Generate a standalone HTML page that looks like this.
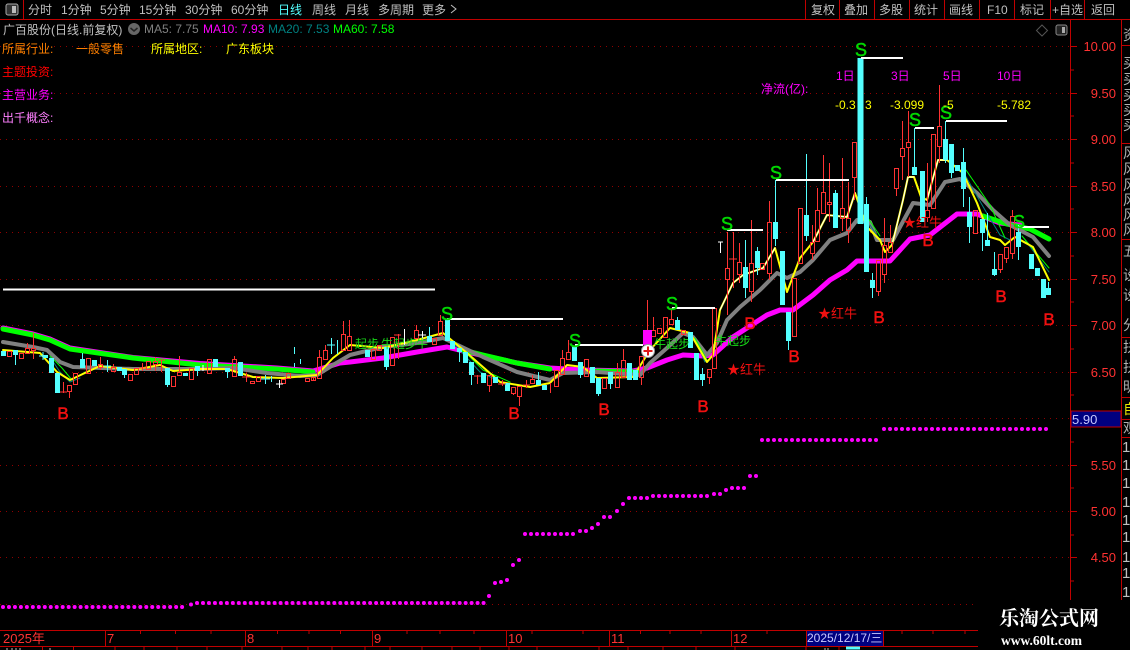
<!DOCTYPE html>
<html><head><meta charset="utf-8"><style>
html,body{margin:0;padding:0;background:#000;width:1130px;height:650px;overflow:hidden}
svg{display:block;font-family:"Liberation Sans","WenQuanYi Zen Hei","Noto Sans CJK SC",sans-serif;font-size:12px}
.c{fill:none;stroke:#54ffff}.r{fill:none;stroke:#ff3232}
</style></head><body>
<svg width="1130" height="650" viewBox="0 0 1130 650" xmlns="http://www.w3.org/2000/svg">
<rect width="1130" height="650" fill="#000"/>

<!-- grid -->
<g stroke="#900000" stroke-width="1" stroke-dasharray="1 5" fill="none">
<path d="M0 46.500H1070M0 93.500H1070M0 139.500H1070M0 186.500H1070M0 232.500H1070M0 279.500H1070M0 325.500H1070M0 372.500H1070M0 418.500H1070M0 465.500H1070M0 511.500H1070M0 557.500H1070M0 604.500H1070"/>
</g>

<!-- top bar -->
<path d="M0 19.500H1130M23.500 0V20M805.500 0V20M839.500 0V20M874.500 0V20M909.500 0V20M944.500 0V20M979.500 0V20M1014.500 0V20M1050.500 0V20M1084.500 0V20" stroke="#c00000" fill="none"/>
<rect x="6" y="4" width="12" height="11" rx="2" fill="#333" stroke="#aaa"/><rect x="12" y="6" width="4" height="7" fill="#bbb"/>
<g fill="#c0c0c0">
<text x="28" y="14">分时</text><text x="61" y="14">1分钟</text><text x="100" y="14">5分钟</text><text x="139" y="14">15分钟</text><text x="185" y="14">30分钟</text><text x="231" y="14">60分钟</text>
<text x="278" y="14" fill="#54ffff">日线</text><text x="312" y="14">周线</text><text x="345" y="14">月线</text><text x="378" y="14">多周期</text><text x="422" y="14">更多</text>
<path d="M451 5l5 4-5 4" fill="none" stroke="#c0c0c0"/>
<text x="811" y="14">复权</text><text x="844" y="14">叠加</text><text x="879" y="14">多股</text><text x="914" y="14">统计</text><text x="949" y="14">画线</text><text x="987" y="14">F10</text><text x="1020" y="14">标记</text><text x="1052" y="14">+自选</text><text x="1091" y="14">返回</text>
</g>

<!-- info -->
<text x="3" y="34" fill="#c0c0c0">广百股份(日线.前复权)</text>
<circle cx="134" cy="29" r="6" fill="#666"/><path d="M130.500 28l3.500 3 3.500-3" fill="none" stroke="#222" stroke-width="1.500"/>
<text x="144" y="33" fill="#808080">MA5: 7.75</text>
<text x="203" y="33" fill="#f0f">MA10: 7.93</text>
<text x="268" y="33" fill="#008080">MA20: 7.53</text>
<text x="333" y="33" fill="#0f0">MA60: 7.58</text>
<text x="2" y="53" fill="#ff8000">所属行业:</text><text x="76" y="53" fill="#ff8000">一般零售</text>
<text x="151" y="53" fill="#ff0">所属地区:</text><text x="226" y="53" fill="#ff0">广东板块</text>
<text x="2" y="76" fill="#f00">主题投资:</text>
<text x="2" y="99" fill="#f0f">主营业务:</text>
<text x="2" y="122" fill="#ff80ff">出千概念:</text>

<!-- corner icons -->
<path d="M1042 25l5.500 5.500-5.500 5.500-5.500-5.500z" fill="none" stroke="#555"/>
<rect x="1056" y="25" width="11" height="10" rx="2" fill="#222" stroke="#888"/><rect x="1062" y="27" width="3" height="6" fill="#aaa"/>

<!-- long white level -->
<path d="M3 289.500H435" stroke="#fff" stroke-width="2"/>

<!-- MA lines -->
<g fill="none" stroke-linejoin="round" stroke-linecap="round">
<path d="M3 328L33 334L50 339L70 348L133 357.500L200 363.500L277 368L313 371L320 369L340 363L350 362L383 358L417 352L447 347L463 351L483 355.500L517 363L550 368L583 370L633 371L647 368L667 360L683 355L703 356L713 355L733 337L767 315L780 310L793 310L813 295L830 280L847 270L857 261L890 261L910 239L930 235L957 214L977 214L1000 223L1020 225" stroke="#f0f" stroke-width="5"/>
<path d="M3 329L33 335L50 340L70 349L133 358L200 365L277 369L313 372" stroke="#0f0" stroke-width="5"/>
<path d="M463 350L483 355L517 363L550 369M597 371L637 372" stroke="#0f0" stroke-width="5"/>
<path d="M983 216L1007 224L1030 229L1049 239" stroke="#0f0" stroke-width="5"/>
<path d="M3 342L33 347L47 350L60 362L73 367L133 369L200 369L233 368L267 373L300 376L317 375L333 365L350 355L383 347L417 343L443 338L483 357L517 372L550 380L563 373L597 372L640 375L650 363L667 348L683 333L693 337L707 355L717 343L727 320L740 307L760 290L777 273L787 278L800 272L813 260L830 240L847 233L857 220L870 222L877 240L893 240L913 203L930 205L945 182L960 179L977 193L993 210L1010 225L1033 237L1049 256" stroke="#808080" stroke-width="4"/>
<path d="M50 357L60 372L70 382L80 378M455 345L480 372L505 384M695 340L705 362M870 225L880 240M965 175L985 210L1000 235L1010 240M1025 240L1049 272" stroke="#008080" stroke-width="1"/>
<path d="M50 356L62 368L72 380L85 372M455 342L483 370L510 382M695 338L707 360M868 218L880 236M966 170L990 205L1005 238M1022 236L1049 268" stroke="#0f0" stroke-width="1"/>
<path d="M3 350L40 353L57 372L70 380L87 372L100 366L133 370L160 365L173 371L200 369L227 369L253 377L283 378L317 375L333 358L350 345L383 348L417 340L443 333L467 353L500 382L530 387L550 383L567 365L583 367L597 378L633 377L650 350L670 328L690 333L707 362L713 355L720 310L733 283L743 275L763 268L775 248L787 292L800 258L813 242L827 215L847 217L855 193L867 227L880 240L885 252L892 245L903 200L908 177L914 177L921 197L927 200L938 160L947 160L963 173L977 203L990 237L1000 240L1005 245L1015 237L1033 247L1049 280" stroke="#ff0" stroke-width="2"/>
<path d="M720 310L733 283L743 275L763 268L775 248M813 242L827 215L847 217L855 193M892 245L903 200L908 177L914 177M927 200L938 160L947 160" stroke="#fff" stroke-width="1"/>
</g>

<!-- candles -->
<g shape-rendering="crispEdges">
<!-- cyan wicks -->
<path class="c" d="M15.500 355V365M82.500 353V368M107.500 360V372M104 366h7M124.500 375V378M39 356h8M43 352V360M167.500 385V387M197.500 371V376M227.500 372V378M265.500 375V384M261 379h9M271.500 376V382M294.500 347V354M294.500 363V367M300.500 359V364M337.500 340V354M331.500 338V354M327 345h8M386.500 367V370M429.500 327V336M459.500 352V362M471.500 375V385M538.500 372V380M580.500 375V378M598.500 394V396M610.500 384V389M677.500 317V320M702.500 368V386M745.500 240V298M757.500 247V275M775.500 180V222M775.500 239V246M788.500 341V350M806.500 154V215M806.500 236V241M835.500 190V193M866.500 197V204M872.500 273V298M914.500 128V167M945.500 121V139M945.500 160V163M951.500 173V178M963.500 148V162M963.500 189V207M969.500 197V212M969.500 227V243M982.500 233V251M987.500 213V240M994.500 252V276M1018.500 225V232M1018.500 247V260M1048.500 282V290"/>
<!-- cyan bodies -->
<path fill="none" stroke="#54ffff" stroke-width="5" d="M3.500 351V356M15.500 350V355M45.500 355V358M51.500 358V373M57.500 373V393M82.500 359V368M94.500 360V366M119.500 367V371M124.500 369V375M167.500 368V385M185.500 373V376M197.500 366V371M215.500 359V367M227.500 368V372M240.500 362V376M367.500 350V357M386.500 347V367M429.500 336V342M447.500 319V341M452.500 341V349M459.500 348V352M465.500 352V363M471.500 362V375M483.500 373V383M495.500 377V383M507.500 383V391M538.500 380V385M544.500 385V390M574.500 346V361M580.500 362V375M592.500 367V383M598.500 378V394M610.500 372V384M629.500 363V380M635.500 370V380M677.500 320V330M690.500 332V348M696.500 353V380M702.500 374V380M745.500 267V288M757.500 251V268M775.500 222V239M782.500 251V305M788.500 312V341M806.500 215V236M835.500 193V228M866.500 204V272M872.500 280V288M914.500 167V175M922.500 171V222M945.500 139V160M951.500 144V173M957.500 165V171M963.500 162V189M969.500 212V227M982.500 219V233M987.500 240V246M994.500 269V275M1018.500 232V247M1031.500 254V269M1037.500 268V276M1043.500 279V298M1048.500 288V295"/>
<path fill="none" stroke="#54ffff" stroke-width="6" d="M860.500 58V224"/>
<!-- red wicks -->
<path class="r" d="M27.500 343V348M33.500 333V348M33.500 350V359M63.500 382V393M60 392h7M69.500 391V398M100.500 357V364M100.500 367V370M113.500 364V367M142.500 363V371M139 368h7M155.500 357V361M155.500 364V371M161.500 360V372M158 360h7M179.500 356V372M179.500 375V376M234.500 356V359M246.500 373V382M242 377h8M313.500 377V381M319.500 350V357M325.500 345V350M343.500 321V334M349.500 320V336M398.500 334V359M394 335h7M416.500 325V330M440.500 315V321M477.500 375V384M474 376h7M489.500 385V392M502.500 380V386M498 384h8M513.500 393V395M519.500 396V406M526.500 380V388M523 385h7M532.500 375V379M550.500 383V393M562.500 350V358M568.500 340V352M617.500 363V372M623.500 349V360M641.500 377V385M647.500 300V330M653.500 317V330M671.500 308V319M709.500 377V384M727.500 232V268M727.500 279V315M733.500 232V288M729 259h8M739.500 243V262M739.500 274V283M751.500 220V263M751.500 291V302M769.500 201V222M769.500 273V280M812.500 225V242M812.500 253V260M817.500 188V210M823.500 155V192M829.500 163V202M829.500 204V222M842.500 158V208M842.500 218V231M848.500 182V218M848.500 230V243M854.500 177V200M878.500 291V296M884.500 218V245M884.500 274V283M890.500 225V242M896.500 188V196M902.500 121V148M902.500 156V180M908.500 111V142M908.500 147V177M927.500 163V210M927.500 217V222M939.500 85V126M939.500 146V163M1000.500 269V273M1006.500 258V263M1012.500 210V216M1012.500 253V259"/>
<!-- red bodies -->
<path class="r" d="M7.500 351.500h4v5h-4zM19.500 353.500h4v5h-4zM25.500 348.500h4v5h-4zM31.500 348.500h4v2h-4zM67.500 385.500h4v6h-4zM73.500 373.500h4v11h-4zM86.500 358.500h4v15h-4zM98.500 364.500h4v3h-4zM111.500 367.500h4v4h-4zM128.500 374.500h4v6h-4zM134.500 368.500h4v6h-4zM146.500 361.500h4v8h-4zM153.500 361.500h4v3h-4zM171.500 376.500h4v10h-4zM177.500 372.500h4v3h-4zM189.500 368.500h4v11h-4zM207.500 359.500h4v14h-4zM232.500 359.500h4v17h-4zM250.500 381.500h4v2h-4zM256.500 376.500h4v5h-4zM281.500 379.500h4v4h-4zM286.500 373.500h4v5h-4zM305.500 378.500h4v3h-4zM311.500 377.500h4v3h-4zM317.500 357.500h4v21h-4zM323.500 350.500h4v9h-4zM341.500 334.500h4v16h-4zM347.500 336.500h4v14h-4zM371.500 349.500h4v10h-4zM377.500 345.500h4v5h-4zM390.500 337.500h4v28h-4zM414.500 330.500h4v8h-4zM432.500 338.500h4v6h-4zM438.500 321.500h4v14h-4zM487.500 375.500h4v10h-4zM511.500 387.500h4v6h-4zM517.500 386.500h4v10h-4zM530.500 379.500h4v4h-4zM554.500 370.500h4v16h-4zM560.500 358.500h4v16h-4zM566.500 352.500h4v7h-4zM584.500 359.500h4v17h-4zM602.500 378.500h4v10h-4zM615.500 372.500h4v15h-4zM621.500 360.500h4v17h-4zM639.500 356.500h4v21h-4zM651.500 330.500h4v6h-4zM657.500 328.500h4v5h-4zM663.500 317.500h4v20h-4zM669.500 319.500h4v5h-4zM681.500 330.500h4v4h-4zM707.500 369.500h4v8h-4zM712.500 308.500h4v60h-4zM725.500 268.500h4v11h-4zM737.500 262.500h4v12h-4zM749.500 263.500h4v28h-4zM760.500 263.500h4v6h-4zM767.500 222.500h4v51h-4zM792.500 278.500h4v58h-4zM798.500 208.500h4v55h-4zM810.500 242.500h4v11h-4zM815.500 210.500h4v31h-4zM821.500 192.500h4v21h-4zM827.500 202.500h4v2h-4zM840.500 208.500h4v10h-4zM846.500 218.500h4v12h-4zM852.500 142.500h4v35h-4zM876.500 260.500h4v31h-4zM882.500 245.500h4v29h-4zM888.500 242.500h4v10h-4zM894.500 168.500h4v20h-4zM900.500 148.500h4v8h-4zM906.500 142.500h4v5h-4zM925.500 210.500h4v7h-4zM931.500 134.500h4v74h-4zM937.500 126.500h4v20h-4zM973.500 210.500h4v23h-4zM998.500 254.500h4v15h-4zM1004.500 247.500h4v11h-4zM1010.500 216.500h4v37h-4z"/>
<path stroke="#fff" fill="none" d="M720.500 242V253M718 242h5M404.500 329V345M422.500 331V340M418 335h8M276 384h7M279.500 380V388M203 365V371"/>
</g>

<!-- white levels -->
<path d="M447 319H563M575 345H643M672 308H715M727 230H763M776 180H849M861 58H903M915 128H934M946 121H1007M1018 227H1049" stroke="#fff" stroke-width="2" fill="none"/>

<!-- magenta block & plus -->
<rect x="643" y="330" width="9" height="15" fill="#f0f"/>
<circle cx="648" cy="351" r="6.500" fill="#fff" stroke="#999"/><path d="M648 346.500V355.500M643.500 351H652.500" stroke="#e01818" stroke-width="2"/>

<!-- 牛起步 -->
<g fill="#17d817">
<text x="355" y="348">起步</text><text x="381" y="348">牛起</text><text x="405" y="348">步</text><text x="416" y="348">牛</text>
<text x="654" y="348">牛起步</text>
<text x="715" y="345">牛起步</text>
</g>

<!-- 红牛 -->
<g fill="#f01010" font-size="13">
<text x="818" y="318">★红牛</text>
<text x="727" y="374">★红牛</text>
<text x="903" y="227">★红牛</text>
</g>

<!-- S / B -->
<g fill="#00d800" stroke="#00d800" stroke-width=".5" font-size="18" text-anchor="middle">
<text x="447" y="320">S</text><text x="575" y="347">S</text><text x="672" y="310">S</text><text x="727" y="230">S</text><text x="776" y="179">S</text><text x="861" y="56">S</text><text x="915" y="126">S</text><text x="946" y="119">S</text><text x="1019" y="228">S</text>
</g>
<g fill="#f01010" stroke="#f01010" stroke-width=".5" font-size="17" text-anchor="middle">
<text x="63" y="419">B</text><text x="514" y="419">B</text><text x="604" y="415">B</text><text x="703" y="412">B</text><text x="750" y="329">B</text><text x="794" y="362">B</text><text x="879" y="323">B</text><text x="928" y="246">B</text><text x="1001" y="302">B</text><text x="1049" y="325">B</text>
</g>

<!-- 净流 -->
<g fill="#f0f">
<text x="761" y="93">净流(亿):</text>
<text x="836" y="80">1日</text><text x="891" y="80">3日</text><text x="943" y="80">5日</text><text x="997" y="80">10日</text>
</g>
<g fill="#ff0">
<text x="835" y="109">-0.3</text><text x="865" y="109">3</text><text x="890" y="109">-3.099</text><text x="943" y="109">-5</text><text x="997" y="109">-5.782</text>
</g>

<!-- SAR dots -->
<g fill="none" stroke="#f0f" stroke-width="4" stroke-linecap="round">
<path stroke-dasharray="0 5.970" d="M3 607H186"/>
<path stroke-dasharray="0 5.970" d="M197 603H484"/>
<path d="M191 604.500h0M489 596h0M495 583h0M501 582h0M507 580h0M513 565h0M519 560h0M580 531h0M586 531h0M592 528h0M598 524h0M604 517h0M610 517h0M617 511h0M623 504h0M714 494h0M720 494h0M726 490h0M750 476h0M756 476h0"/>
<path stroke-dasharray="0 6" d="M525 534H575"/>
<path stroke-dasharray="0 6" d="M629 498H648"/>
<path stroke-dasharray="0 6" d="M653 496H709"/>
<path stroke-dasharray="0 6" d="M732 488H745"/>
<path stroke-dasharray="0 6" d="M762 440H879"/>
<path stroke-dasharray="0 6" d="M884 429H1052"/>
</g>

<!-- price axis -->
<path d="M1070.500 20V600M1121.500 20V600" stroke="#c00000" fill="none"/>
<path d="M1070 46.500h7M1070 70h4M1070 93.500h7M1070 116h4M1070 139.500h7M1070 163h4M1070 186.500h7M1070 209h4M1070 232.500h7M1070 256h4M1070 279.500h7M1070 302h4M1070 325.500h7M1070 349h4M1070 372.500h7M1070 395h4M1070 418.500h7M1070 442h4M1070 465.500h7M1070 488h4M1070 511.500h7M1070 535h4M1070 557.500h7M1070 581h4" stroke="#c00000" fill="none"/>
<g fill="#ff3232" text-anchor="end" font-size="13">
<text x="1116" y="51">10.00</text><text x="1116" y="98">9.50</text><text x="1116" y="144">9.00</text><text x="1116" y="191">8.50</text><text x="1116" y="237">8.00</text><text x="1116" y="284">7.50</text><text x="1116" y="330">7.00</text><text x="1116" y="377">6.50</text><text x="1116" y="470">5.50</text><text x="1116" y="516">5.00</text><text x="1116" y="562">4.50</text>
</g>
<rect x="1071" y="411" width="50" height="16" fill="#000080" stroke="#c00000"/>
<text x="1072" y="424" fill="#c8c8ff" font-size="13">5.90</text>

<!-- right strip -->
<path d="M1122 45.500H1130M1122 143.500H1130M1122 239.500H1130M1122 337.500H1130M1122 397.500H1130M1122 419.500H1130M1122 437.500H1130" stroke="#c00000" fill="none"/>
<g fill="#b0b0b0" font-size="14">
<text x="1123" y="40">资</text>
<text x="1123" y="68">买</text><text x="1123" y="84">买</text><text x="1123" y="100">买</text><text x="1123" y="115">买</text><text x="1123" y="130">买</text>
<text x="1123" y="158">风</text><text x="1123" y="174">风</text><text x="1123" y="190">风</text><text x="1123" y="205">风</text><text x="1123" y="220">风</text><text x="1123" y="235">风</text>
<text x="1123" y="256">五</text><text x="1123" y="280">设</text><text x="1123" y="300">设</text><text x="1123" y="330">分</text>
<text x="1123" y="352">扶</text><text x="1123" y="372">扶</text><text x="1123" y="392">明</text>
<text x="1123" y="414" fill="#e8e800">自</text><text x="1123" y="433">观</text>
</g>
<g fill="#c0c0c0" font-size="15">
<text x="1122" y="452">1</text><text x="1122" y="470">1</text><text x="1122" y="488">1</text><text x="1122" y="507">1</text><text x="1122" y="525">1</text><text x="1122" y="542">1</text><text x="1122" y="562">1</text><text x="1122" y="578">1</text><text x="1122" y="597">1</text>
</g>

<!-- time axis -->
<path d="M0 630.500H978M0 646.500H978M105.500 630V646M245.500 630V646M372.500 630V646M506.500 630V646M609.500 630V646M731.500 630V646" stroke="#c00000" fill="none"/>
<path d="M140.500 631v3M175.500 631v3M211 631v3M277.500 631v3M309 631v3M340.500 631v3M407 631v3M440 631v3M474 631v3M532 631v3M583 631v3M640.500 631v3M670 631v3M701 631v3M767 631v3M902 631v3M933 631v3M965 631v3" stroke="#c00000" fill="none"/>
<path d="M42.500 647v3M73.500 647v3M115 647v3M144 647v3M177 647v3M207 647v3M242 647v3M282 647v3M308 647v3M332 647v3M365 647v3M390 647v3M422 647v3M452 647v3M480 647v3M509 647v3M537 647v3M599 647v3M628 647v3M663 647v3M696 647v3M735 647v3M806 647v3M839 647v3" stroke="#c00000" fill="none"/>
<g fill="#ff3232" font-size="13">
<text x="3" y="643">2025年</text><text x="107" y="643">7</text><text x="247" y="643">8</text><text x="374" y="643">9</text><text x="508" y="643">10</text><text x="611" y="643">11</text><text x="733" y="643">12</text>
</g>
<rect x="806.500" y="630.500" width="77" height="16" fill="#000080" stroke="#c00000"/>
<text x="807" y="642" fill="#c8c8ff">2025/12/17/三</text>
<path d="M7 648v2M12 648v2M16 648v2M20 648v2M50 648v2M825 648v2M828 648v2" stroke="#bbb" fill="none"/>
<path d="M846 648h14" stroke="#54ffff" stroke-width="3"/>

<!-- watermark -->
<rect x="978" y="604" width="152" height="46" fill="#000"/>
<text x="999" y="625" fill="#fff" font-family="'Noto Serif CJK SC','Liberation Serif',serif" font-weight="bold" font-size="20">乐淘公式网</text>
<text x="1001" y="645" fill="#fff" font-family="'Liberation Serif',serif" font-weight="bold" font-size="13.500">www.60lt.com</text>
</svg>
</body></html>
